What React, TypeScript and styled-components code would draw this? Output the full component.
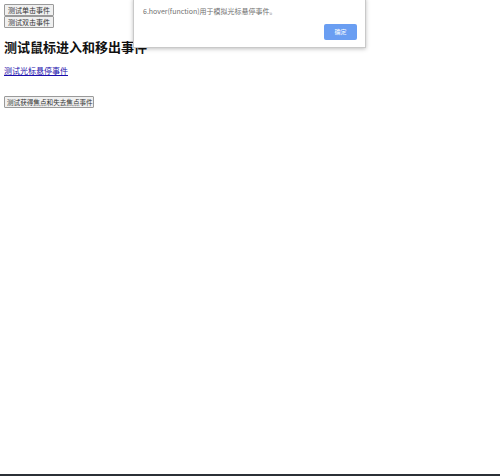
import React from "react";
import styled, { createGlobalStyle } from "styled-components";

const Global = createGlobalStyle`
  html, body { margin: 0; padding: 0; background: #fff; }
  body { font-family: "Noto Sans CJK SC", "Noto Sans", sans-serif; }
`;

const Page = styled.div`
  position: relative;
  width: 500px;
  height: 476px;
  box-sizing: border-box;
  padding: 4px;
  border-bottom: 2px solid #2b3036;
  overflow: hidden;
`;

const Btn = styled.button<{ $w?: number }>`
  display: block;
  box-sizing: border-box;
  height: 12px;
  width: ${(p) => (p.$w ? `${p.$w}px` : "auto")};
  padding: 0 ${(p) => (p.$w ? "2px" : "3px")};
  margin: 0;
  font-family: "Noto Sans CJK SC", sans-serif;
  font-size: ${(p) => (p.$w ? "6.6px" : "7px")};
  line-height: 10px;
  color: #333;
  background: #f0f0f0;
  border: 1px solid #9a9a9a;
  border-radius: 1px;
  white-space: nowrap;
  overflow: hidden;
  text-align: left;
`;

const Heading = styled.h2`
  margin: 11px 0 0;
  font-family: "Noto Sans CJK SC", sans-serif;
  font-size: 13px;
  line-height: 16px;
  font-weight: 700;
  color: #111;
`;

const Link = styled.a`
  display: inline-block;
  margin-top: 8px;
  font-family: "Noto Sans CJK SC", sans-serif;
  font-size: 8px;
  line-height: 10px;
  color: #1a0dab;
  text-decoration: underline;
`;

const Spacer = styled.div`
  height: 17px;
`;

const Dialog = styled.div`
  position: absolute;
  left: 133px;
  top: -2px;
  width: 233px;
  height: 50px;
  box-sizing: border-box;
  background: #fff;
  border: 1px solid #c9c9c9;
  box-shadow: 0 1px 4px rgba(0, 0, 0, 0.25);
  padding: 7px 8px 0 9px;
  display: flex;
  flex-direction: column;
`;

const DialogText = styled.div`
  font-family: "Noto Sans CJK SC", sans-serif;
  font-size: 7px;
  line-height: 10px;
  color: #707070;
`;

const DialogFooter = styled.div`
  display: flex;
  justify-content: flex-end;
  margin-top: 8px;
`;

const OkBtn = styled.button`
  width: 33px;
  height: 16px;
  padding: 0;
  border: none;
  border-radius: 2px;
  background: #6a9ef2;
  color: #fff;
  font-family: "Noto Sans CJK SC", sans-serif;
  font-size: 6px;
  line-height: 16px;
`;

export default function App() {
  return (
    <>
      <Global />
      <Page>
        <Btn>测试单击事件</Btn>
        <Btn>测试双击事件</Btn>
        <Heading>测试鼠标进入和移出事件</Heading>
        <Link href="#">测试光标悬停事件</Link>
        <Spacer />
        <Btn $w={90}>测试获得焦点和失去焦点事件</Btn>
        <Dialog>
          <DialogText>6.hover(function)用于模拟光标悬停事件。</DialogText>
          <DialogFooter>
            <OkBtn>确定</OkBtn>
          </DialogFooter>
        </Dialog>
      </Page>
    </>
  );
}
